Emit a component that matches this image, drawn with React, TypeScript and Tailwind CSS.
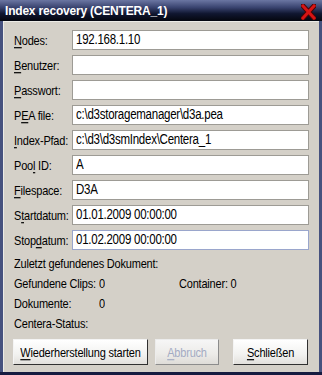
import React from "react";

const font = "font-['Liberation_Sans',Arial,sans-serif]";
const tall = "inline-block origin-center scale-y-[1.2]";

function Row({ label, value, blue }: { label: React.ReactNode; value: string; blue?: boolean }) {
  return (
    <div className="flex h-[20px] items-center">
      <div className="w-[58px] shrink-0 whitespace-nowrap text-[11px] leading-none tracking-[-0.2px] text-black">
        <span className={tall}>{label}</span>
      </div>
      <div
        className={`flex h-[20px] w-[237px] shrink-0 items-center whitespace-nowrap border bg-white pl-[3px] text-[11.5px] leading-none tracking-[-0.25px] text-black ${
          blue ? "border-[#9aa6cc]" : "border-[#9d9b95]"
        }`}
      >
        <span className="inline-block origin-center scale-y-[1.25]">{value}</span>
      </div>
    </div>
  );
}

function U({ children }: { children: React.ReactNode }) {
  return <span className="underline decoration-1 underline-offset-[2px]">{children}</span>;
}

export default function App() {
  return (
    <div className={`flex h-[375px] w-[322px] flex-col bg-[#46517e] ${font}`}>
      <div className="flex h-[21px] shrink-0 items-center justify-between bg-[linear-gradient(to_bottom,#6b76a2_0%,#3a4470_35%,#101630_65%,#04060e_100%)] pl-[5px] pr-[6px]">
        <span className="whitespace-nowrap text-[12px] font-bold leading-none tracking-[-0.2px] text-white">
          <span className="inline-block origin-center scale-y-[1.1]">Index recovery (CENTERA_1)</span>
        </span>
        <svg width="15" height="16" viewBox="0 0 15 16" className="mt-[2px]">
          <path d="M2 2 L13 14 M13 2 L2 14" stroke="#4a0606" strokeWidth="5" strokeLinecap="square" />
          <path d="M2 2 L13 14 M13 2 L2 14" stroke="#d81414" strokeWidth="3" strokeLinecap="square" />
        </svg>
      </div>
      <div className="mx-[3px] flex flex-1 flex-col border-l border-t border-[#ecebe6] bg-[#d4d0c8] pl-[10px] pr-[10px] pt-[8px]">
        <div className="flex flex-col gap-[5px]">
          <Row label={<><U>N</U>odes:</>} value="192.168.1.10" />
          <Row label={<><U>B</U>enutzer:</>} value="" />
          <Row label={<><U>P</U>asswort:</>} value="" />
          <Row label={<>P<U>E</U>A file:</>} value="c:\d3storagemanager\d3a.pea" />
          <Row label={<><U>I</U>ndex-Pfad:</>} value="c:\d3\d3smIndex\Centera_1" />
          <Row label={<>Poo<U>l</U> ID:</>} value="A" />
          <Row label={<><U>F</U>ilespace:</>} value="D3A" />
          <Row label={<>S<U>t</U>artdatum:</>} value="01.01.2009 00:00:00" />
          <Row label={<>Stop<U>d</U>atum:</>} value="01.02.2009 00:00:00" blue />
        </div>
        <div className="mt-[3px] flex flex-col whitespace-nowrap text-[11px] leading-[20px] tracking-[-0.2px] text-black">
          <div><span className={tall}>Zuletzt gefundenes Dokument:</span></div>
          <div className="flex">
            <span className={`w-[85px] shrink-0 ${tall}`}>Gefundene Clips:</span>
            <span className={`w-[80px] shrink-0 ${tall}`}>0</span>
            <span className={tall}>Container: 0</span>
          </div>
          <div className="flex">
            <span className={`w-[85px] shrink-0 ${tall}`}>Dokumente:</span>
            <span className={tall}>0</span>
          </div>
          <div><span className={tall}>Centera-Status:</span></div>
        </div>
        <div className="ml-[-1px] mt-[6px] flex whitespace-nowrap text-[11px] leading-none tracking-[-0.2px]">
          <button className="flex h-[26px] w-[135px] shrink-0 items-center justify-center border border-b-[#303030] border-l-[#f4f4f4] border-r-[#303030] border-t-[#f4f4f4] bg-[linear-gradient(to_bottom,#ffffff,#f2f2f0_60%,#e2e0dc)] text-black">
            <span className={tall}><U>W</U>iederherstellung starten</span>
          </button>
          <button className="ml-[7px] flex h-[26px] w-[64px] shrink-0 items-center justify-center border border-b-[#8c8c8c] border-l-[#ececec] border-r-[#8c8c8c] border-t-[#ececec] bg-[linear-gradient(to_bottom,#f6f6f6,#ecebe8_60%,#dedcd8)] text-[#a3abc3]">
            <span className={tall}><U>A</U>bbruch</span>
          </button>
          <button className="ml-[14px] flex h-[26px] w-[75px] shrink-0 items-center justify-center border border-b-[#303030] border-l-[#f4f4f4] border-r-[#303030] border-t-[#f4f4f4] bg-[linear-gradient(to_bottom,#ffffff,#f2f2f0_60%,#e2e0dc)] text-black">
            <span className={tall}><U>S</U>chließen</span>
          </button>
        </div>
      </div>
      <div className="h-[3px] shrink-0 bg-[#161b40]" />
    </div>
  );
}
